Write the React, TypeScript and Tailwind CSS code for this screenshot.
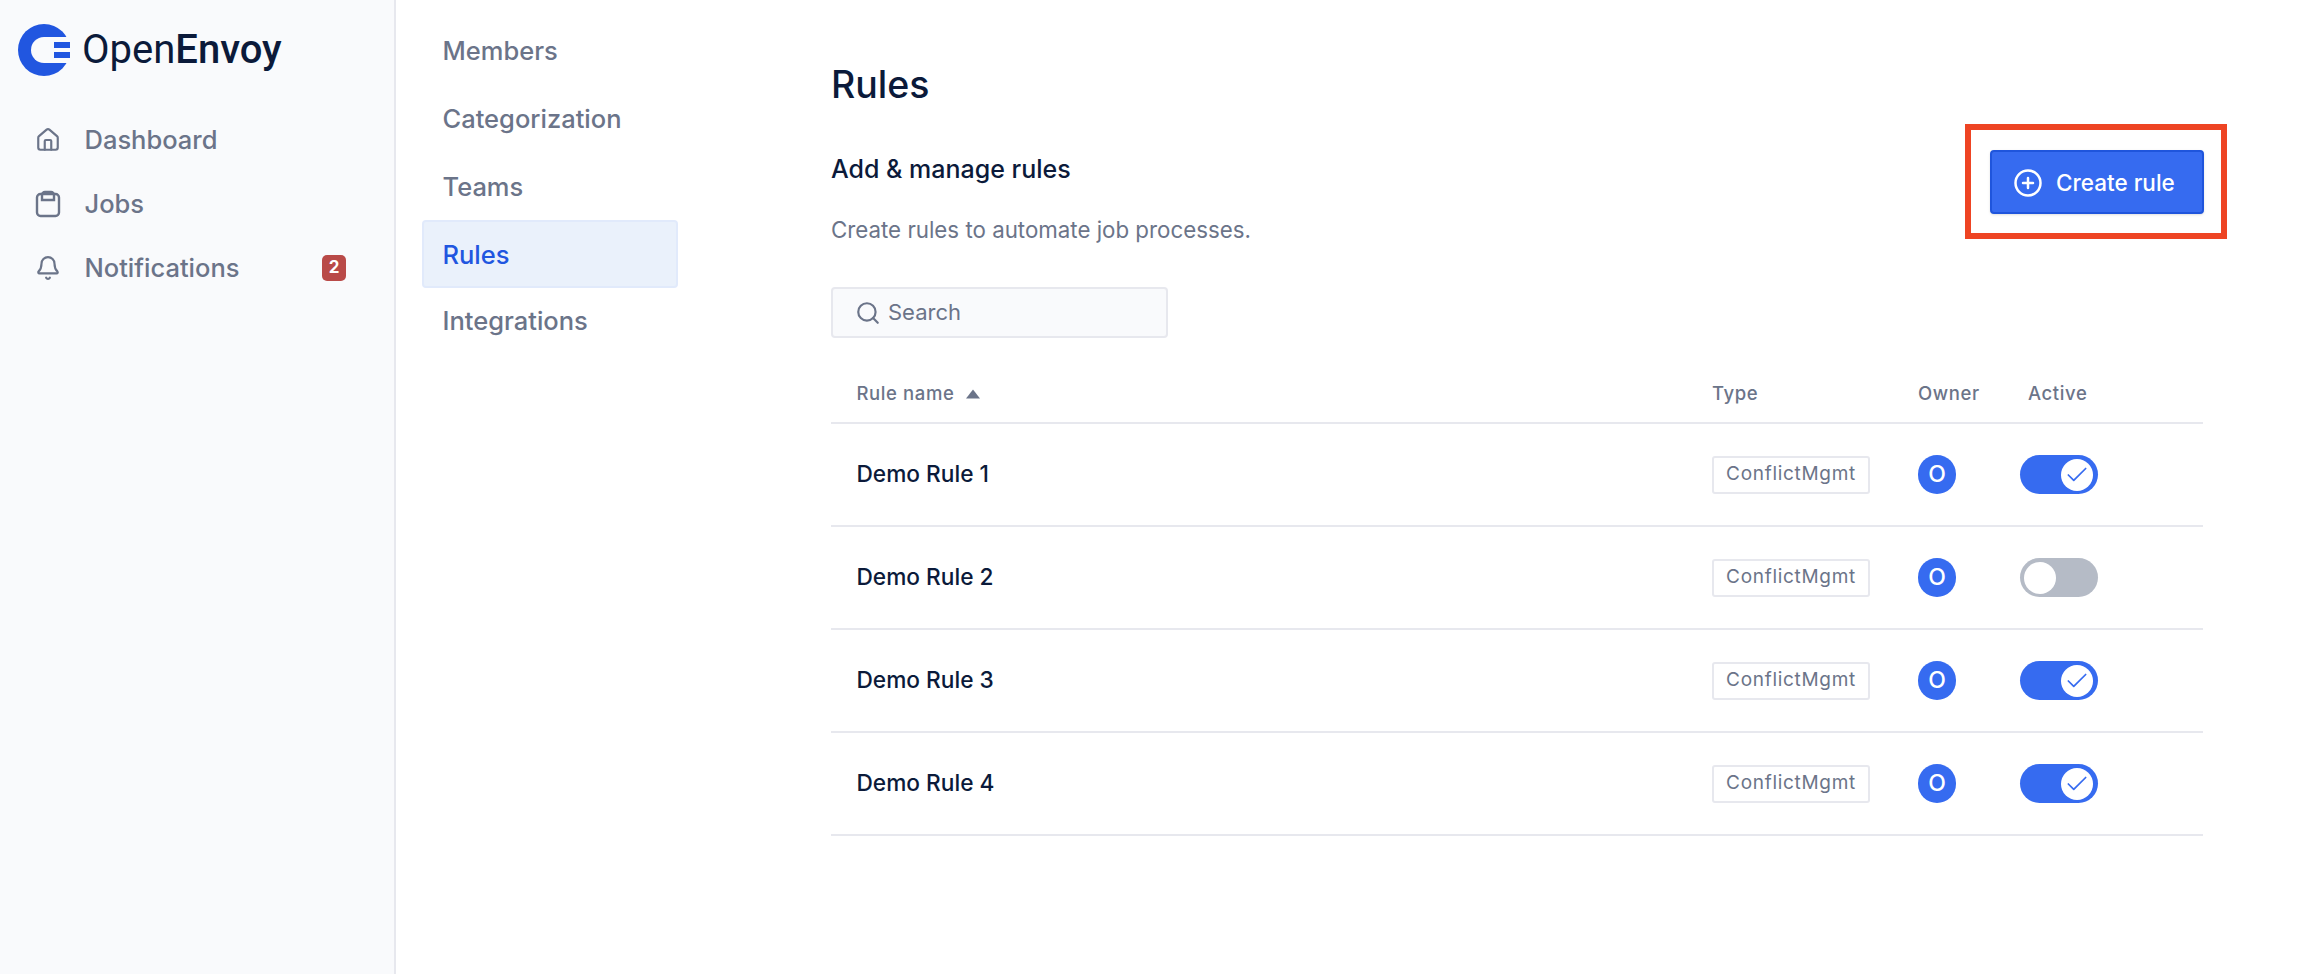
import React from "react";
import { House, Bell, Search, CirclePlus, Check } from "lucide-react";

const rules = [
  { name: "Demo Rule 1", active: true },
  { name: "Demo Rule 2", active: false },
  { name: "Demo Rule 3", active: true },
  { name: "Demo Rule 4", active: true },
];

function Logo() {
  return (
    <svg width="54" height="54" viewBox="0 0 54 54" className="shrink-0">
      <circle cx="26" cy="27" r="26" fill="#2156E0" />
      <circle cx="26" cy="27" r="13" fill="#F9FAFC" />
      <rect x="26" y="14" width="28" height="26" fill="#F9FAFC" />
      <rect x="36" y="19" width="16" height="6" fill="#2156E0" />
      <rect x="36" y="29" width="16" height="6" fill="#2156E0" />
    </svg>
  );
}

function JobsIcon() {
  return (
    <svg width="26" height="28" viewBox="0 0 26 28" fill="none" stroke="#6B7489" strokeWidth="2.4">
      <rect x="2" y="4" width="22" height="22" rx="3.5" />
      <path d="M7 10V5a3 3 0 0 1 3-3h6a3 3 0 0 1 3 3v5z" />
    </svg>
  );
}

function SideItem({ icon, label, badge }: { icon: React.ReactNode; label: string; badge?: string }) {
  return (
    <div className="flex items-center h-[64px] pl-[35px]">
      <div className="w-[26px] flex justify-center shrink-0">{icon}</div>
      <span className="ml-[23.5px] text-[25.5px] leading-none font-medium text-[#6B7489]">{label}</span>
      {badge && (
        <span className="ml-auto mr-[48px] w-[24px] h-[26px] rounded-[5px] bg-[#B94A48] text-white text-[17px] font-bold flex items-center justify-center">
          {badge}
        </span>
      )}
    </div>
  );
}

function Toggle({ on }: { on: boolean }) {
  return (
    <div
      className={
        on
          ? "w-[78px] h-[39px] rounded-full bg-[#366BF0] py-[3.5px] pr-[5px] flex justify-end"
          : "w-[78px] h-[39px] rounded-full bg-[#B5BBC6] py-[3.5px] pl-[4px] flex justify-start"
      }
    >
      <div className="w-[32px] h-[32px] rounded-full bg-white flex items-center justify-center">
        {on && <Check size={26} strokeWidth={1.6} color="#366BF0" />}
      </div>
    </div>
  );
}

function RuleRow({ name, active }: { name: string; active: boolean }) {
  return (
    <div className="grid grid-cols-[881px_206px_102px_1fr] items-center h-[103px] border-b-2 border-[#E7E8EE]">
      <span className="pl-[25.5px] text-[22.7px] font-medium text-[#0B1A3A]">{name}</span>
      <span className="w-[158px] h-[38px] flex items-center justify-center border-2 border-[#E7E8EE] rounded-[3px] text-[19px] tracking-[0.7px] text-[#6B7489]">
        ConflictMgmt
      </span>
      <span className="w-[38px] h-[39px] rounded-full bg-[#366BF0] text-white text-[23px] font-medium flex items-center justify-center">
        O
      </span>
      <Toggle on={active} />
    </div>
  );
}

export default function App() {
  return (
    <div className="flex h-[974px] bg-white font-['Inter',sans-serif]">
      <aside className="w-[396px] shrink-0 bg-[#F9FAFC] border-r-2 border-[#E7E8EE]">
        <div className="flex items-center pl-[18px] pt-[23px] h-[77px]">
          <Logo />
          <span className="ml-[10px] font-['Roboto',sans-serif] text-[40px] leading-none text-[#0B1A3A]">
            Open<span className="font-medium">Envoy</span>
          </span>
        </div>
        <nav className="mt-[31px]">
          <SideItem icon={<House size={30} strokeWidth={2} color="#6B7489" />} label="Dashboard" />
          <SideItem icon={<JobsIcon />} label="Jobs" />
          <SideItem icon={<Bell size={30} strokeWidth={2} color="#6B7489" />} label="Notifications" badge="2" />
        </nav>
      </aside>

      <nav className="w-[435px] shrink-0 pl-[26px] pt-[17px] text-[25.5px] font-medium text-[#6B7489]">
        <div className="h-[68px] pl-[20.5px] pt-px flex items-center">Members</div>
        <div className="h-[68px] pl-[20.5px] pt-px flex items-center">Categorization</div>
        <div className="h-[67px] pl-[20.5px] pt-[2px] flex items-center">Teams</div>
        <div className="w-[256px] h-[68px] pl-[18.5px] pt-[2px] flex items-center rounded-[4px] bg-[#EAF1FB] border-2 border-[#E1EAFB] text-[#2156E0]">
          Rules
        </div>
        <div className="h-[65px] pl-[20.5px] pt-[2px] flex items-center">Integrations</div>
      </nav>

      <main className="w-[1372px] shrink-0 pt-[60px]">
        <h1 className="text-[37.5px] leading-[50px] font-medium text-[#0B1A3A]">Rules</h1>
        <div className="flex items-start justify-between">
          <div className="pt-[44px]">
            <h2 className="text-[25px] leading-[30px] font-medium text-[#0B1A3A]">Add &amp; manage rules</h2>
            <p className="mt-[31px] text-[22.3px] leading-[30px] text-[#6B7489]">Create rules to automate job processes.</p>
          </div>
          <div className="-mr-[24px] mt-[14px] pt-[20px] pb-[19px] pl-[19px] pr-[17px] border-[6px] border-[#EE4423]">
            <button className="w-[214px] h-[64px] flex items-center pl-[21px] pt-px gap-[13px] rounded-[4px] bg-[#366BF0] border-2 border-[#1F55DC] text-white text-[22.5px] font-medium shadow-sm">
              <CirclePlus size={30} strokeWidth={2} />
              Create rule
            </button>
          </div>
        </div>
        <div className="mt-[42px] w-[337px] h-[51px] flex items-center gap-[7px] pl-[22px] rounded-[4px] bg-[#F9FAFC] border-2 border-[#E7E8EE] text-[22px] text-[#6B7489]">
          <Search size={26} strokeWidth={2} />
          Search
        </div>
        <div className="mt-[23px] grid grid-cols-[881px_206px_102px_1fr] items-center h-[63px] pt-[4px] border-b-2 border-[#E7E8EE] text-[18.5px] font-medium tracking-[0.6px] text-[#6B7489]">
          <div className="pl-[25.5px] flex items-center gap-[12px]">
            Rule name
            <svg width="14" height="10" viewBox="0 0 14 10" fill="#6B7489">
              <path d="M7 0.5 L14 9.5 H0 Z" />
            </svg>
          </div>
          <div>Type</div>
          <div>Owner</div>
          <div className="pl-[8px]">Active</div>
        </div>
        {rules.map((r) => (
          <RuleRow key={r.name} name={r.name} active={r.active} />
        ))}
      </main>
    </div>
  );
}
